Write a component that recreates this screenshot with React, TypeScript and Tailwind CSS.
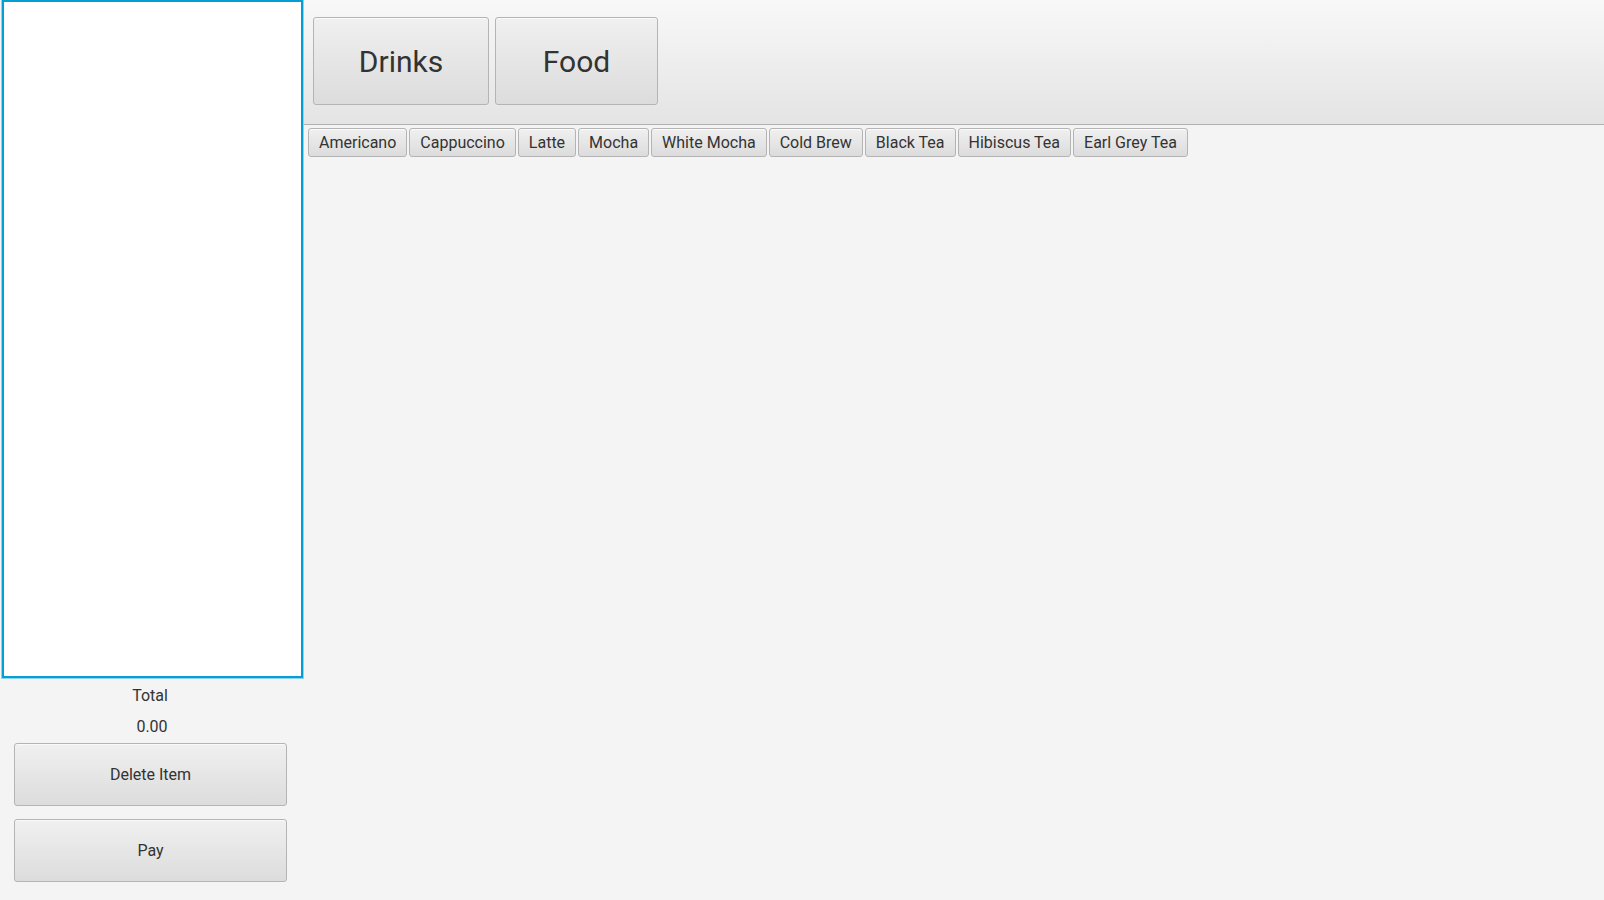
const DRINKS = [
  'Americano',
  'Cappuccino',
  'Latte',
  'Mocha',
  'White Mocha',
  'Cold Brew',
  'Black Tea',
  'Hibiscus Tea',
  'Earl Grey Tea',
];

// modena-ish button look
const btn =
  'rounded-[3px] border border-[#b4b4b4] bg-gradient-to-b from-[#f0f0f0] to-[#dcdcdc] text-[#333333] shadow-[inset_0_1px_0_#fafafa]';

export default function App() {
  return (
    <div
      className="flex h-[900px] w-[1604px] bg-[#f4f4f4] text-[#333333]"
      style={{ fontFamily: 'Roboto, "Liberation Sans", sans-serif' }}
    >
      {/* order side */}
      <aside className="flex w-[304px] shrink-0 flex-col">
        <div className="ml-[2px] mt-0 h-[678px] w-[301px] border-2 border-[#039ed3] bg-white shadow-[0_0_0_1px_#8fd3ec]" />
        <div className="mt-[9px] pr-[4px] text-center text-[16px] leading-[18px]">Total</div>
        <div className="mt-[13px] text-center text-[16px] leading-[18px]">0.00</div>
        <button className={`${btn} ml-[14px] mt-[7px] h-[63px] w-[273px] text-[16px]`}>
          Delete Item
        </button>
        <button className={`${btn} ml-[14px] mt-[13px] h-[63px] w-[273px] text-[16px]`}>
          Pay
        </button>
      </aside>

      {/* menu side */}
      <main className="flex flex-1 flex-col">
        <div className="flex h-[125px] items-start gap-[6px] border-b border-[#b0b0b0] bg-gradient-to-b from-[#f8f8f8] to-[#e4e4e4] pl-[9px] pt-[17px]">
          <button className={`${btn} h-[88px] w-[176px] text-[30px]`}>Drinks</button>
          <button className={`${btn} h-[88px] w-[163px] text-[30px]`}>Food</button>
        </div>
        <div className="flex gap-[2px] pl-[4px] pt-[3px]">
          {DRINKS.map((d) => (
            <button key={d} className={`${btn} h-[29px] px-[10px] text-[16px] leading-none`}>
              {d}
            </button>
          ))}
        </div>
      </main>
    </div>
  );
}
